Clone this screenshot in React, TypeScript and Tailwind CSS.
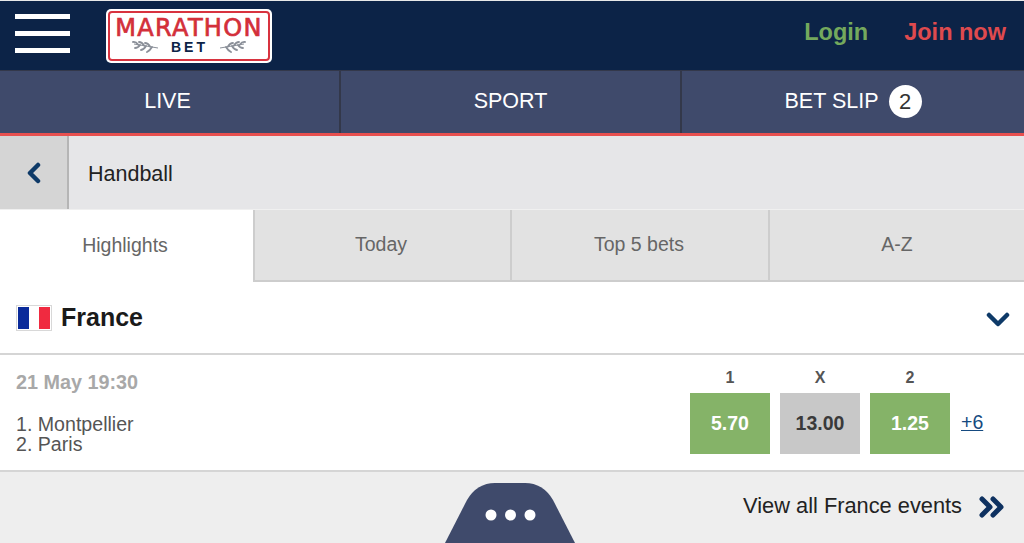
import React from "react";

const font = { fontFamily: '"Liberation Sans", Arial, sans-serif' };

function Sprig({ flip }: { flip?: boolean }) {
  return (
    <svg width="27" height="14" viewBox="0 0 27 14" className={flip ? "-scale-x-100" : ""} fill="none">
      <path d="M2 4 Q14 6 26 8" stroke="#8a8f98" strokeWidth="1" />
      <path d="M6 4.5 Q4 1.5 1 2 M12 5.5 Q10 2 7 2 M18 6.5 Q16 3 13 3 M8 5 Q6 8 3 8 M14 6 Q12 9.5 9 10 M20 7 Q18 10.5 15 12" stroke="#8a8f98" strokeWidth="1.8" strokeLinecap="round" />
    </svg>
  );
}

function Logo() {
  return (
    <div className="ml-[36px] w-[166px] h-[54px] bg-white rounded-[5px] p-[2px] shrink-0 self-center">
      <div className="w-full h-full border-2 border-[#d8333f] rounded-[4px] flex flex-col items-center pt-[5px]">
        <div className="text-[#d32f3a] text-[24px] leading-[20px] h-[20px] tracking-[1.3px] whitespace-nowrap [-webkit-text-stroke:0.7px_#d32f3a]" style={{ fontFamily: '"DejaVu Sans", sans-serif' }}>
          MARATHON
        </div>
        <div className="flex items-center gap-[12px] h-[14px] mt-[2px]">
          <Sprig />
          <span className="text-[#0c2347] text-[14px] leading-[14px] font-bold tracking-[3px] w-[36px]">BET</span>
          <Sprig flip />
        </div>
      </div>
    </div>
  );
}

function Chevron({ d, w, h, vb, sw = 3.4 }: { d: string; w: number; h: number; vb: string; sw?: number }) {
  return (
    <svg width={w} height={h} viewBox={vb} fill="none">
      <path d={d} stroke="#0e3a68" strokeWidth={sw} strokeLinecap="round" strokeLinejoin="round" />
    </svg>
  );
}

function Odd({ label, value, green }: { label: string; value: string; green?: boolean }) {
  return (
    <div className="w-[80px] flex flex-col items-center">
      <div className="text-[16px] leading-[20px] font-bold text-[#555] mb-[5px]">{label}</div>
      <div className={`w-[80px] h-[61px] flex items-center justify-center text-[19.5px] font-bold ${green ? "bg-[#85b368] text-white" : "bg-[#c8c8c8] text-[#3a3a3a]"}`}>
        {value}
      </div>
    </div>
  );
}

export default function App() {
  const tabText = "flex items-center justify-center text-[19.5px] text-[#666]";
  const tabOff = "bg-[#e2e2e2] border-l-2 border-b-2 border-[#cdcdcd]";
  return (
    <div className="w-[1024px] h-[543px] overflow-hidden bg-white flex flex-col" style={font}>
      <header className="h-[70px] shrink-0 bg-[#0c2347] flex items-center pl-[15px] border-t border-[#e8e8e8]">
        <div className="w-[55px] h-[39px] flex flex-col justify-between shrink-0 mb-[5px]">
          <div className="h-[5px] bg-white" />
          <div className="h-[5px] bg-white" />
          <div className="h-[5px] bg-white" />
        </div>
        <Logo />
        <div className="ml-auto flex items-center gap-[36px] pr-[18px] text-[23.5px] font-bold pb-[5px]">
          <span className="text-[#74a95d]">Login</span>
          <span className="text-[#df4a4e]">Join now</span>
        </div>
      </header>

      <nav className="h-[66px] shrink-0 bg-[#3f4a6b] border-t border-[#33384a] border-b-[3px] border-b-[#e8504f] flex text-white text-[21.5px]">
        <div className="w-[339px] flex items-center justify-center pr-[4px] pb-[1px]">LIVE</div>
        <div className="w-[343px] flex items-center justify-center border-l-2 border-r-2 border-[#33384a] pb-[1px]">SPORT</div>
        <div className="flex-1 flex items-center justify-center gap-[10px] pb-[1px]">
          <span>BET SLIP</span>
          <span className="w-[33px] h-[33px] rounded-full bg-white text-[#333] flex items-center justify-center text-[22px] mb-[1px]">2</span>
        </div>
      </nav>

      <div className="h-[74px] shrink-0 bg-[#e6e6e8] flex border-b border-[#f0f0f0]">
        <div className="w-[69px] bg-[#d5d5d5] border-r-2 border-[#b5b5b5] flex items-center justify-center">
          <Chevron w={14} h={22} vb="0 0 14 22" d="M11 3 L3 11 L11 19" sw={4.5} />
        </div>
        <div className="flex items-center pl-[19px] text-[21.5px] text-[#222] pt-[4px]">Handball</div>
      </div>

      <div className="h-[72px] shrink-0 flex bg-white">
        <div className={`w-[253px] bg-white pr-[3px] ${tabText}`}>Highlights</div>
        <div className={`w-[257px] pr-[3px] ${tabOff} ${tabText}`}>Today</div>
        <div className={`w-[258px] pr-[2px] ${tabOff} ${tabText}`}>Top 5 bets</div>
        <div className={`flex-1 ${tabOff} ${tabText}`}>A-Z</div>
      </div>

      <div className="h-[73px] shrink-0 flex items-center border-b-2 border-[#d5d5d5] pl-[16px] pr-[14px]">
        <div className="w-[36px] h-[26px] border border-[#d8d8d8] p-[1px] flex">
          <div className="flex-1 bg-[#0a2a9a]" />
          <div className="flex-1 bg-white" />
          <div className="flex-1 bg-[#f02a40]" />
        </div>
        <span className="ml-[9px] text-[25px] font-bold text-[#1a1a1a]">France</span>
        <div className="ml-auto pt-[4px]">
          <Chevron w={24} h={15} vb="0 0 24 15" d="M3 3 L12 12 L21 3" sw={4.5} />
        </div>
      </div>

      <div className="h-[117px] shrink-0 flex border-b-2 border-[#d5d5d5] pl-[16px]">
        <div className="flex flex-col pt-[16px]">
          <div className="text-[19.8px] leading-[22px] font-bold text-[#a8a8a8]">21 May 19:30</div>
          <div className="mt-[21px] text-[19.6px] leading-[20px] text-[#555]">
            <div>1. Montpellier</div>
            <div>2. Paris</div>
          </div>
        </div>
        <div className="ml-auto flex pt-[13px] pr-[74px] relative gap-[10px]">
          <Odd label="1" value="5.70" green />
          <Odd label="X" value="13.00" />
          <Odd label="2" value="1.25" green />
          <span className="absolute left-[271px] top-[54px] text-[19.5px] leading-[26px] text-[#154a80] underline">+6</span>
        </div>
      </div>

      <div className="flex-1 bg-[#eeeeee] relative flex items-center justify-end pr-[19px] pb-[2px]">
        <span className="text-[21.8px] text-[#222] pb-[1px]">View all France events</span>
        <svg className="ml-[17px]" width="26" height="22" viewBox="0 0 26 22" fill="none">
          <path d="M3 3 L11 11 L3 19 M14 3 L22 11 L14 19" stroke="#0e3160" strokeWidth="5" strokeLinecap="round" strokeLinejoin="round" />
        </svg>
        <svg className="absolute left-[445px] top-[11px]" width="130" height="60" viewBox="0 0 130 60">
          <path d="M0 60 L22 17 Q32 0 50 0 L80 0 Q98 0 108 17 L130 60 Z" fill="#3f4a6b" />
          <circle cx="46" cy="32" r="5.5" fill="white" />
          <circle cx="65.5" cy="32" r="5.5" fill="white" />
          <circle cx="85" cy="32" r="5.5" fill="white" />
        </svg>
      </div>
    </div>
  );
}
